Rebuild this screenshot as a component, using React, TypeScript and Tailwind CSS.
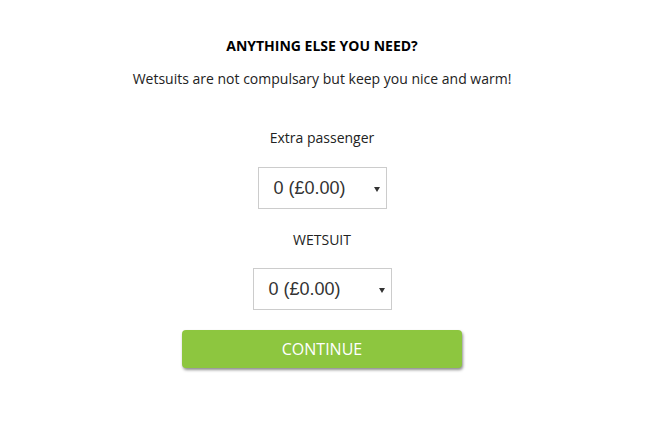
function Arrow() {
  return (
    <svg width="6" height="5" viewBox="0 0 6 5" className="mt-[3px]">
      <polygon points="0,0 6,0 3,5" fill="#333333" />
    </svg>
  );
}

export default function App() {
  const sel = "flex items-center justify-between h-[42px] border border-[#cccccc] bg-white pl-[15px] pr-[6px] text-[18px] text-[#333333]";
  return (
    <div className="w-[648px] h-[432px] bg-white" style={{ fontFamily: '"Open Sans", sans-serif' }}>
      <div className="w-[644px] flex flex-col items-center">
        <div className="mt-[36px] h-[20px] leading-[20px] text-[14px] font-bold text-black">ANYTHING ELSE YOU NEED?</div>
        <div className="mt-[13px] h-[20px] leading-[20px] text-[14px] text-[#222222]">Wetsuits are not compulsary but keep you nice and warm!</div>
        <div className="mt-[39px] h-[20px] leading-[20px] text-[14px] text-[#222222]">Extra passenger</div>
        <div className={sel + " mt-[19px] w-[129px]"}>
          <span style={{ fontFamily: '"Liberation Sans", Arial, sans-serif' }}>0 (£0.00)</span>
          <Arrow />
        </div>
        <div className="mt-[21px] h-[20px] leading-[20px] text-[14px] text-[#222222]">WETSUIT</div>
        <div className={sel + " mt-[18px] w-[139px]"}>
          <span style={{ fontFamily: '"Liberation Sans", Arial, sans-serif' }}>0 (£0.00)</span>
          <Arrow />
        </div>
        <button className="mt-[20px] w-[280px] h-[38px] rounded-[4px] bg-[#8dc63f] text-white text-[16px] shadow-[1px_2px_3px_rgba(0,0,0,0.45)]">
          CONTINUE
        </button>
      </div>
    </div>
  );
}
